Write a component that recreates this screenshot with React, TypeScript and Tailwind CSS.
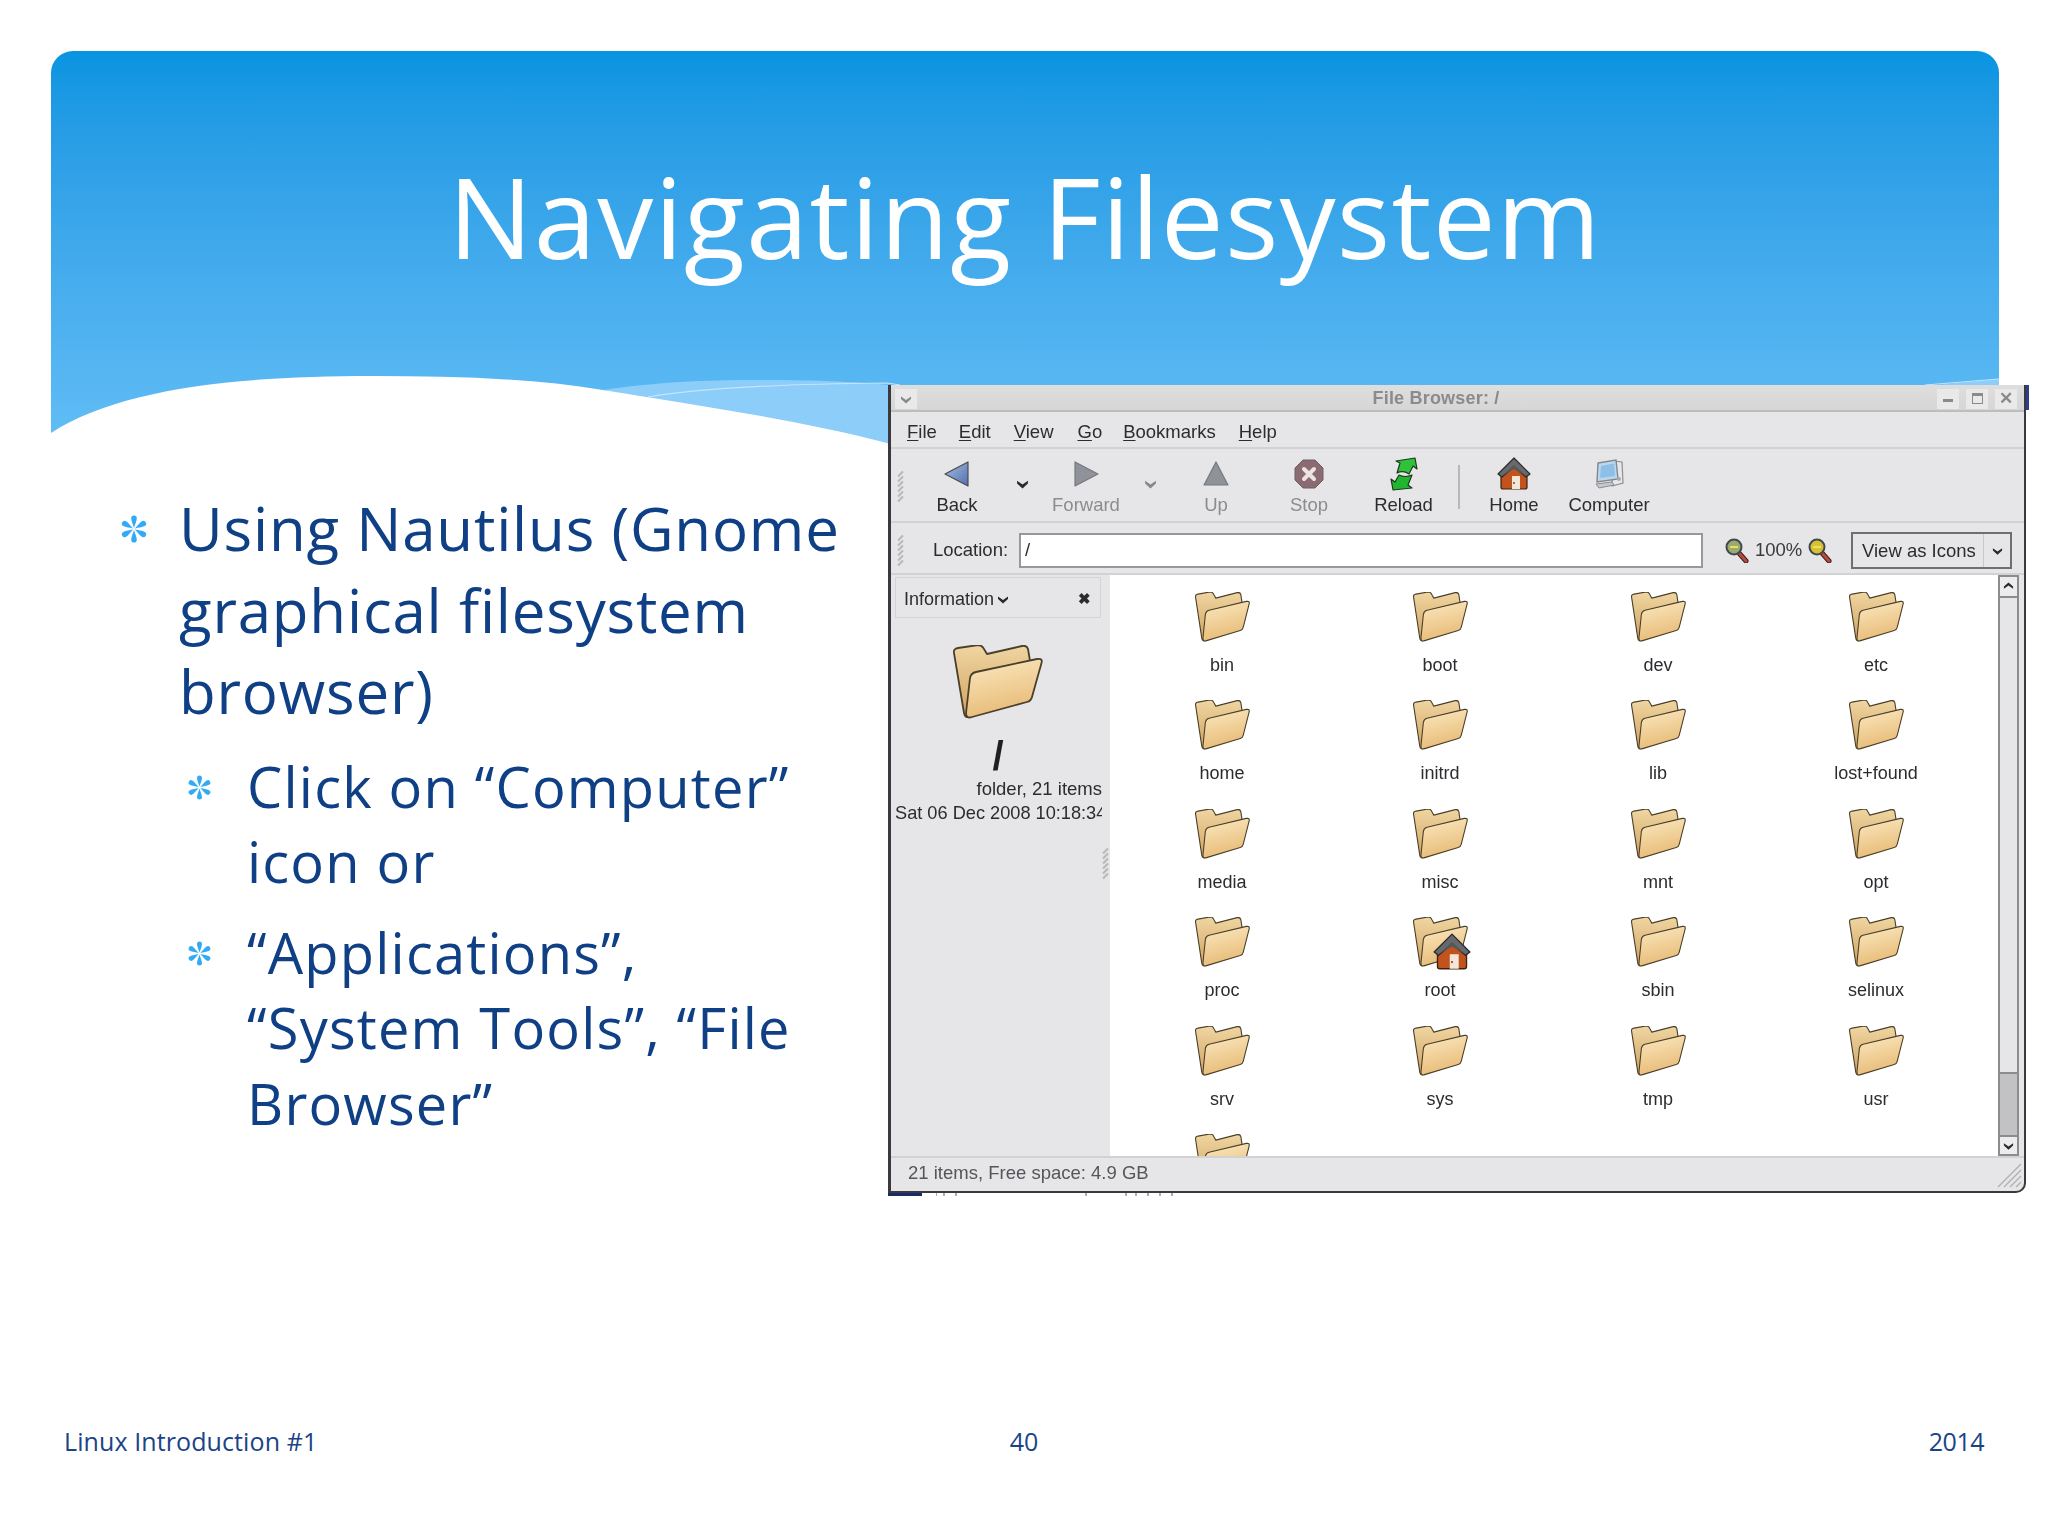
import React from "react";

const folders = [
  "bin","boot","dev","etc","home","initrd","lib","lost+found","media","misc","mnt","opt","proc","root","sbin","selinux","srv","sys","tmp","usr","",
];

function Folder({ w = 55, h = 50, id }: { w?: number; h?: number; id: string }) {
  return (
    <svg width={w} height={h} viewBox="0 0 90 74" preserveAspectRatio="none" className="block shrink-0">
      <defs>
        <linearGradient id={id + "a"} x1="0" y1="0" x2="0" y2="1">
          <stop offset="0" stopColor="#f0d6a2" />
          <stop offset="1" stopColor="#cfa25f" />
        </linearGradient>
        <linearGradient id={id + "b"} x1="0.3" y1="0" x2="0.6" y2="1">
          <stop offset="0" stopColor="#fae6bc" />
          <stop offset="1" stopColor="#e6b872" />
        </linearGradient>
      </defs>
      <path d="M1 8Q0 4 5 3L25 0Q29 0 31 4L34 9L69 1Q74 0 75 4L78 22L16 72Q12 73 11 68Z" fill={`url(#${id}a)`} stroke="#4a3f2a" strokeWidth="1.800" strokeLinejoin="round" />
      <path d="M17 33Q18 28 23 27L84 14Q90 13 88.500 18L79 52Q78 56 74 57L19 72Q13 74 13 68Z" fill={`url(#${id}b)`} stroke="#4a3f2a" strokeWidth="1.800" strokeLinejoin="round" />
    </svg>
  );
}

function House({ size = 34 }: { size?: number }) {
  return (
    <svg width={size} height={size} viewBox="0 0 34 34" className="block">
      <path d="M4 17L4 30Q4 32 6 32L28 32Q30 32 30 30L30 17L17 7Z" fill="#c2531c" stroke="#3a2110" strokeWidth="1.200" />
      <path d="M1 17L17 1L33 17L29 20L17 10L5 20Z" fill="#666a6c" stroke="#2c2c2c" strokeWidth="1.200" strokeLinejoin="round" />
      <path d="M5 19L17 8L29 19L17 12Z" fill="#55585a" />
      <rect x="15" y="19" width="8" height="13" fill="#f3e7d8" />
      <circle cx="17" cy="26" r="1" fill="#a33" />
    </svg>
  );
}

function Asterisk({ size }: { size: number }) {
  return (
    <svg width={size} height={size} viewBox="-13 -13 26 26" className="block">
      {[0, 60, 120, 180, 240, 300].map((a) => (
        <path key={a} d="M0 -1C-0.800 -4 -2.600 -7.500 -2.600 -10A2.600 2.600 0 0 1 2.600 -10C2.600 -7.500 0.800 -4 0 -1Z" fill="#33aaf5" transform={`rotate(${a})`} />
      ))}
    </svg>
  );
}

function Chevron({ color = "#2a2a2a", size = 12 }: { color?: string; size?: number }) {
  return (
    <svg width={size} height={size} viewBox="0 0 12 12" className="block">
      <path d="M1 3.500L6 7L11 3.500L11 6L6 10.500L1 6Z" fill={color} />
    </svg>
  );
}

function Tri({ kind }: { kind: "back" | "forward" | "up" }) {
  if (kind === "back")
    return (
      <svg width="28" height="28" viewBox="0 0 28 28">
        <defs>
          <linearGradient id="bk" x1="0" y1="0" x2="1" y2="1">
            <stop offset="0" stopColor="#a9bfe0" />
            <stop offset="1" stopColor="#4f70ad" />
          </linearGradient>
        </defs>
        <path d="M2 14L25 2L25 26Z" fill="url(#bk)" stroke="#4a4a55" strokeWidth="1.200" strokeLinejoin="round" />
      </svg>
    );
  if (kind === "forward")
    return (
      <svg width="28" height="28" viewBox="0 0 28 28">
        <path d="M26 14L3 2L3 26Z" fill="#8f9298" stroke="#77797d" strokeWidth="1.200" strokeLinejoin="round" />
      </svg>
    );
  return (
    <svg width="28" height="28" viewBox="0 0 28 28">
      <path d="M14 2L26 25L2 25Z" fill="#8f9298" stroke="#77797d" strokeWidth="1.200" strokeLinejoin="round" />
    </svg>
  );
}

function Stop() {
  return (
    <svg width="30" height="30" viewBox="0 0 30 30">
      <path d="M9 1L21 1L29 9L29 21L21 29L9 29L1 21L1 9Z" fill="#8b6a72" stroke="#6d6065" />
      <path d="M10 10L20 20M20 10L10 20" stroke="#ece4e4" strokeWidth="4" strokeLinecap="round" />
    </svg>
  );
}

function Reload() {
  return (
    <svg width="30" height="34" viewBox="0 0 30 34">
      <path d="M8 16L11 6L7 4L26 1L28 12L24 9L20 17Q14 13 8 16Z" fill="#2fc23a" stroke="#1c3a1c" strokeWidth="1.200" strokeLinejoin="round" />
      <path d="M23 18L19 28L23 31L4 33L2 22L6 25L10 18Q16 21 23 18Z" fill="#22b52f" stroke="#1c3a1c" strokeWidth="1.200" strokeLinejoin="round" />
    </svg>
  );
}

function Computer() {
  return (
    <svg width="30" height="30" viewBox="0 0 30 30">
      <path d="M19 2L28 3L29 24L18 27Z" fill="#e8e8ea" stroke="#8a8d92" strokeWidth="1.200" />
      <path d="M4 4L22 1L24 20L3 23Z" fill="#bcd6ea" stroke="#7f8791" strokeWidth="1.400" />
      <path d="M7 7L20 4.500L21 17L6 19Z" fill="#8cc0e8" />
      <path d="M2 25L18 23L20 26L5 29Z" fill="#c6c8cc" stroke="#8a8d92" />
      <circle cx="25" cy="20" r="2" fill="#aaa" />
    </svg>
  );
}

function Magnifier({ inner }: { inner: string }) {
  return (
    <svg width="24" height="25" viewBox="0 0 24 25">
      <path d="M14 15L21 23" stroke="#3a2020" strokeWidth="5" strokeLinecap="round" />
      <path d="M14 15L21 23" stroke="#b84a3a" strokeWidth="3" strokeLinecap="round" />
      <circle cx="9" cy="9" r="7.500" fill={inner} stroke="#3f4a50" strokeWidth="2" />
      <path d="M5 9L13 9" stroke="#e8e060" strokeWidth="2" />
    </svg>
  );
}

function Grip() {
  return (
    <div className="flex flex-col gap-[3px]">
      {[0, 1, 2, 3, 4, 5].map((i) => (
        <div key={i} className="h-[2px] w-[7px] -rotate-45 bg-[#b8b8ba]" />
      ))}
    </div>
  );
}

function TB({ w, label, dim, children }: { w: string; label: string; dim?: boolean; children: React.ReactNode }) {
  return (
    <div className={`${w} flex flex-col items-center`}>
      <div className="flex h-[36px] items-center justify-center">{children}</div>
      <div className={`mt-[1px] text-[18.500px] leading-[24px] ${dim ? "text-[#8c8c8e]" : "text-[#2c2c30]"}`}>{label}</div>
    </div>
  );
}

function MenuItem({ first, rest, ml }: { first: string; rest: string; ml: string }) {
  return (
    <span className={ml}>
      <span className="underline underline-offset-2">{first}</span>
      {rest}
    </span>
  );
}

function Bullet({ children, sub }: { children: React.ReactNode; sub?: boolean }) {
  return (
    <div className={sub ? "flex mb-[15px] leading-[75.500px] text-[56px] tracking-[1.200px]" : "flex leading-[81.600px] text-[60px] tracking-[0.800px] mb-[16px]"}>
      <div className={sub ? "w-[60px] pt-[26px]" : "w-[59px] pt-[27px]"}>
        <Asterisk size={sub ? 25 : 28} />
      </div>
      <div className="whitespace-nowrap">{children}</div>
    </div>
  );
}

export default function App() {
  return (
    <div className="relative flex h-[1536px] w-[2048px] flex-col overflow-hidden bg-white font-['Open_Sans',sans-serif]">
      <header className="relative mx-[51px] mt-[51px] h-[399px] w-[1948px] shrink-0 overflow-hidden rounded-t-[22px] bg-linear-to-b from-[#0794e1] to-[#62bef6]">
        <h1 className="relative pt-[90px] text-center text-[112px] leading-[150px] tracking-[1.250px] text-white">Navigating Filesystem</h1>
        <svg width="1948" height="80" viewBox="51 370 1948 80" className="absolute bottom-0 left-0">
          <path d="M603 390C660 382 700 380 760 380C820 380 860 382 900 386L1925 386L1999 379L1999 450L887 450Z" fill="#8ccdf9" />
          <path d="M648 397C700 388 780 384 887 383L900 385M1925 385L1999 379" fill="none" stroke="#c4e5fb" strokeWidth="1.200" />
          <path d="M51 433C120 388 240 376 373 376C450 376 530 378 603 390C700 406 800 420 887 443L905 450L51 450Z" fill="#ffffff" />
        </svg>
      </header>

      <main className="flex flex-1 items-start">
        <section className="w-[888px] shrink-0 pl-[120px] pt-[38px] text-[#0f3f85]">
          <Bullet>
            Using Nautilus (Gnome
            <br />
            graphical filesystem
            <br />
            browser)
          </Bullet>
          <div className="pl-[67px]">
            <Bullet sub>
              Click on “Computer”
              <br />
              icon or
            </Bullet>
            <Bullet sub>
              “Applications”,
              <br />
              “System Tools”, “File
              <br />
              Browser”
            </Bullet>
          </div>
        </section>

        <div className="relative z-10 -mt-[65px] shrink-0">
          <section className="flex h-[808px] w-[1138px] flex-col overflow-hidden rounded-br-[10px] border-y-0 border-r-[2px] border-b-[2px] border-l-[3px] border-[#3a3a3e] bg-[#e6e6e8] font-['Liberation_Sans',sans-serif] text-[#2c2c30] blur-[0.4px]">
            <div className="flex h-[27px] shrink-0 items-center border-b-[2px] border-[#bdbdbd] bg-linear-to-b from-[#dededf] to-[#d6d6d6] pt-[2px]">
              <div className="ml-[4px] flex h-[20px] w-[22px] items-center justify-center bg-[#e9e9ea]">
                <Chevron color="#8a8a8a" />
              </div>
              <div className="flex-1 pl-[18px] text-center text-[18px] font-bold tracking-[0.200px] text-[#8b8b8d]">File Browser: /</div>
              <div className="flex gap-[7px] pr-[7px]">
                <div className="flex h-[20px] w-[22px] items-center justify-center bg-[#e9e9ea]">
                  <div className="mt-[3px] h-[3px] w-[10px] bg-[#8a8a8a]" />
                </div>
                <div className="flex h-[20px] w-[22px] items-center justify-center bg-[#e9e9ea]">
                  <div className="h-[11px] w-[11px] border-[1.500px] border-t-[3px] border-[#8a8a8a]" />
                </div>
                <div className="flex h-[20px] w-[22px] items-center justify-center bg-[#e9e9ea] text-[17px] font-bold leading-none text-[#8a8a8a]">✕</div>
              </div>
            </div>

            <div className="flex h-[37px] shrink-0 items-center border-b-[2px] border-[#d2d2d2] pl-[16px] pt-[4px] text-[18.500px]">
              <MenuItem first="F" rest="ile" ml="" />
              <MenuItem first="E" rest="dit" ml="ml-[22px]" />
              <MenuItem first="V" rest="iew" ml="ml-[23px]" />
              <MenuItem first="G" rest="o" ml="ml-[24px]" />
              <MenuItem first="B" rest="ookmarks" ml="ml-[21px]" />
              <MenuItem first="H" rest="elp" ml="ml-[23px]" />
            </div>

            <div className="flex h-[74px] shrink-0 items-center border-b-[2px] border-[#d2d2d2] pl-[6px] pt-[3px]">
              <div className="w-[11px]">
                <Grip />
              </div>
              <TB w="w-[98px]" label="Back"><Tri kind="back" /></TB>
              <div className="flex w-[32px] justify-center pb-[6px]"><Chevron size={13} /></div>
              <TB w="w-[96px]" label="Forward" dim><Tri kind="forward" /></TB>
              <div className="flex w-[32px] justify-center pb-[6px]"><Chevron size={13} color="#88888a" /></div>
              <TB w="w-[100px]" label="Up" dim><Tri kind="up" /></TB>
              <TB w="w-[86px]" label="Stop" dim><Stop /></TB>
              <TB w="w-[103px]" label="Reload"><Reload /></TB>
              <div className="mx-[3px] h-[44px] w-[2px] bg-[#b8b8ba]" />
              <TB w="w-[102px]" label="Home"><House size={34} /></TB>
              <TB w="w-[88px]" label="Computer"><Computer /></TB>
            </div>

            <div className="flex h-[52px] shrink-0 items-center border-b-[2px] border-[#d2d2d2] pl-[6px] pt-[4px] text-[18.500px]">
              <div className="w-[36px]">
                <Grip />
              </div>
              <span className="w-[86px]">Location:</span>
              <div className="flex h-[35px] w-[684px] items-center border-[2px] border-[#98989a] bg-white pl-[4px]">/</div>
              <div className="ml-[22px] flex w-[126px] items-center">
                <Magnifier inner="#9bab70" />
                <span className="ml-[6px] text-[#3a3a3e]">100%</span>
                <span className="ml-[6px]"><Magnifier inner="#d9c030" /></span>
              </div>
              <div className="flex h-[37px] w-[161px] items-center border-[2px] border-[#6f6f72]">
                <span className="w-[131px] border-r border-[#c8c8ca] pl-[9px] leading-[33px]">View as Icons</span>
                <span className="flex flex-1 justify-center"><Chevron size={11} /></span>
              </div>
            </div>

            <div className="flex min-h-0 flex-1">
              <aside className="relative w-[219px] shrink-0 overflow-hidden">
                <div className="ml-[4px] mt-[2px] flex h-[41px] w-[206px] items-center border border-[#d4d4d6] pl-[8px] pt-[3px] text-[18px]">
                  <span>Information</span>
                  <span className="ml-[3px]"><Chevron size={12} /></span>
                  <span className="ml-[69px] text-[15px] font-bold">✖</span>
                </div>
                <div className="ml-[62px] mt-[27px]">
                  <Folder w={90} h={74} id="big" />
                </div>
                <div className="mt-[14px] pr-[5px] text-center text-[40px] font-bold leading-[46px] text-[#1f1f22]">/</div>
                <div className="mt-[-2px] pr-[8px] text-right text-[18.500px] leading-[24px]">folder, 21 items</div>
                <div className="ml-[4px] w-[207px] overflow-hidden whitespace-nowrap text-[18.200px] leading-[24px]">Sat 06 Dec 2008 10:18:34</div>
                <div className="absolute right-[1px] top-[275px]">
                  <Grip />
                </div>
              </aside>

              <div className="grid flex-1 grid-cols-[repeat(4,218px)] content-start auto-rows-[108.400px] overflow-hidden bg-white pl-[3px] pt-[17px]">
                {folders.map((f) => (
                  <div key={f || "last"} className="flex flex-col items-center">
                    <div className="relative">
                      <Folder id={"f" + (f.replace("+", "") || "last")} />
                      {f === "root" && (
                        <div className="absolute bottom-[-4px] right-[-3px]">
                          <House size={38} />
                        </div>
                      )}
                    </div>
                    {f && <div className="mt-[12px] text-[18px] leading-[22px]">{f}</div>}
                  </div>
                ))}
              </div>

              <div className="flex w-[21px] shrink-0 flex-col border-x-[2px] border-[#8c8c8e] bg-[#c2c2c4]">
                <div className="flex h-[23px] shrink-0 items-center justify-center border-y-[2px] border-[#8c8c8e] bg-[#ececee]">
                  <span className="rotate-180"><Chevron size={11} /></span>
                </div>
                <div className="h-[476px] shrink-0 border-b-[2px] border-[#8c8c8e] bg-[#e6e6e8]" />
                <div className="flex-1" />
                <div className="flex h-[21px] shrink-0 items-center justify-center border-y-[2px] border-[#8c8c8e] bg-[#ececee]">
                  <Chevron size={11} />
                </div>
              </div>
              <div className="w-[5px] shrink-0" />
            </div>

            <div className="flex h-[35px] shrink-0 items-center justify-between border-t-[2px] border-[#d2d2d2] pb-[4px] pl-[17px] text-[18.500px] text-[#55555a]">
              <span>21 items, Free space: 4.9 GB</span>
              <svg width="26" height="26" viewBox="0 0 26 26" className="mr-[2px] mt-[5px]">
                <path d="M2 25L25 2M8 25L25 8M14 25L25 14M20 25L25 20" stroke="#b0b0b2" strokeWidth="1.300" />
              </svg>
            </div>
          </section>
          <div className="absolute right-[-3px] top-0 h-[25px] w-[3px] bg-[#2f3c86]" />
          <div className="absolute bottom-[-3px] left-0 h-[3px] w-[34px] bg-[#1b2a6b]" />
          <svg width="260" height="3" viewBox="0 0 260 3" className="absolute bottom-[-3px] left-[48px]">
            <path d="M0 0V3M8 0V3M20 0V3M150 0V3M190 0V3M200 0V3M212 0V3M224 0V3M236 0V3" stroke="#777" strokeWidth="1.200" />
          </svg>
        </div>
      </main>

      <footer className="flex h-[113px] shrink-0 items-start justify-between px-[64px] text-[25px] leading-[36px] text-[#1a4486]">
        <span className="w-[300px] tracking-[0.100px]">Linux Introduction #1</span>
        <span>40</span>
        <span className="w-[300px] text-right tracking-[-0.500px]">2014</span>
      </footer>
    </div>
  );
}
